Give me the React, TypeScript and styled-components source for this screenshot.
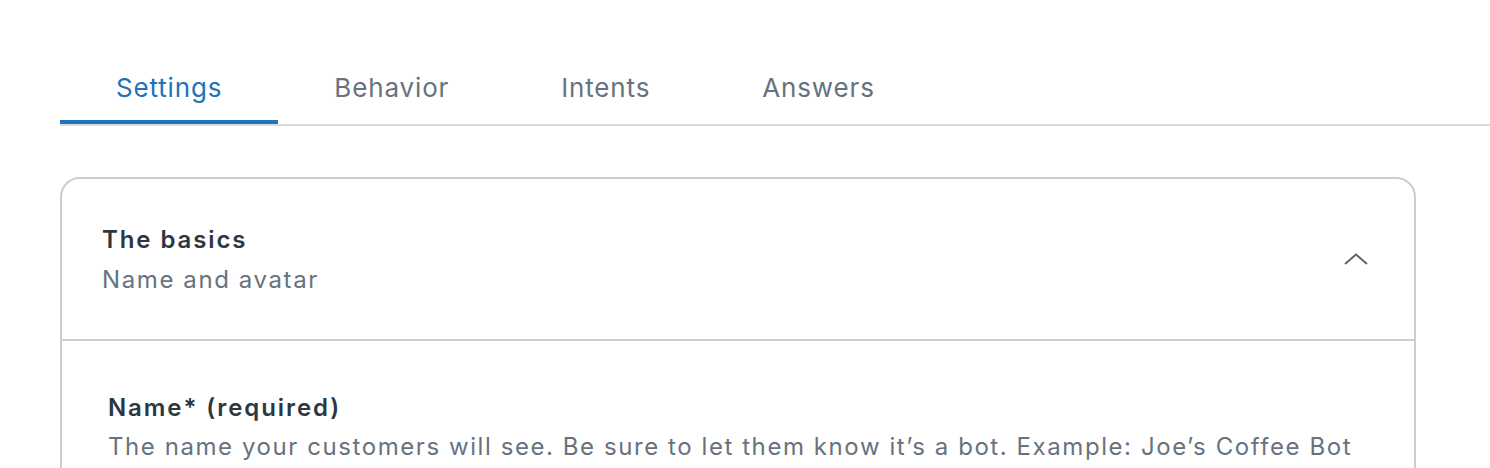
import React, { useState } from 'react';
import styled, { createGlobalStyle } from 'styled-components';

const GlobalStyle = createGlobalStyle`
  html, body {
    margin: 0;
    padding: 0;
    background: #fff;
    font-family: Inter, "Noto Sans", "Liberation Sans", sans-serif;
  }
`;

const color = {
  primary: '#2172b8',
  textDark: '#2d3741',
  textMedium: '#67727e',
  border: '#c9ced3',
  borderLight: '#d8dce0',
};

const Page = styled.div`
  padding: 52px 0 0 60px;
  height: 468px;
  box-sizing: border-box;
  overflow: hidden;
`;

const TabList = styled.div`
  display: flex;
  border-bottom: 2px solid ${color.borderLight};
`;

interface TabProps {
  active: boolean;
}

const Tab = styled.button<TabProps>`
  appearance: none;
  background: none;
  border: 0;
  border-bottom: 4px solid ${({ active }) => (active ? color.primary : 'transparent')};
  margin: 0;
  padding: 20px 56px 16px;
  font-family: inherit;
  font-size: 26px;
  line-height: 32px;
  letter-spacing: 0.85px;
  color: ${({ active }) => (active ? color.primary : color.textMedium)};
  cursor: pointer;
`;

const Card = styled.section`
  margin: 51px 74px 0 0;
  border: 2px solid ${color.border};
  border-radius: 20px;
`;

const CardHeader = styled.div`
  display: flex;
  align-items: center;
  justify-content: space-between;
  padding: 41px 46px 39px 40px;
  border-bottom: 2px solid ${color.border};
`;

const CardTitle = styled.div`
  font-size: 24px;
  line-height: 40px;
  font-weight: 600;
  letter-spacing: 1.9px;
  color: ${color.textDark};
`;

const CardSubtitle = styled.div`
  font-size: 24px;
  line-height: 40px;
  letter-spacing: 1.6px;
  color: ${color.textMedium};
`;

const Chevron = styled.svg`
  width: 24px;
  height: 12px;
  margin-top: -2px;
`;

const CardBody = styled.div`
  padding: 47px 46px 40px;
`;

const FieldLabel = styled.div`
  font-size: 24px;
  line-height: 40px;
  font-weight: 600;
  letter-spacing: 1.9px;
  color: ${color.textDark};
`;

const FieldHelp = styled.div`
  font-size: 24px;
  line-height: 38px;
  letter-spacing: 1.57px;
  white-space: nowrap;
  color: ${color.textMedium};
`;

const tabs = ['Settings', 'Behavior', 'Intents', 'Answers'];

export default function App() {
  const [active, setActive] = useState('Settings');

  return (
    <Page>
      <GlobalStyle />
      <TabList>
        {tabs.map((t) => (
          <Tab key={t} active={t === active} onClick={() => setActive(t)}>
            {t}
          </Tab>
        ))}
      </TabList>
      <Card>
        <CardHeader>
          <div>
            <CardTitle>The basics</CardTitle>
            <CardSubtitle>Name and avatar</CardSubtitle>
          </div>
          <Chevron viewBox="0 0 24 12" fill="none">
            <path d="M1 11L12 1.5L23 11" stroke="#5b6672" strokeWidth="2" />
          </Chevron>
        </CardHeader>
        <CardBody>
          <FieldLabel>Name* (required)</FieldLabel>
          <FieldHelp>
            The name your customers will see. Be sure to let them know it’s a bot. Example: Joe’s Coffee Bot
          </FieldHelp>
        </CardBody>
      </Card>
    </Page>
  );
}
